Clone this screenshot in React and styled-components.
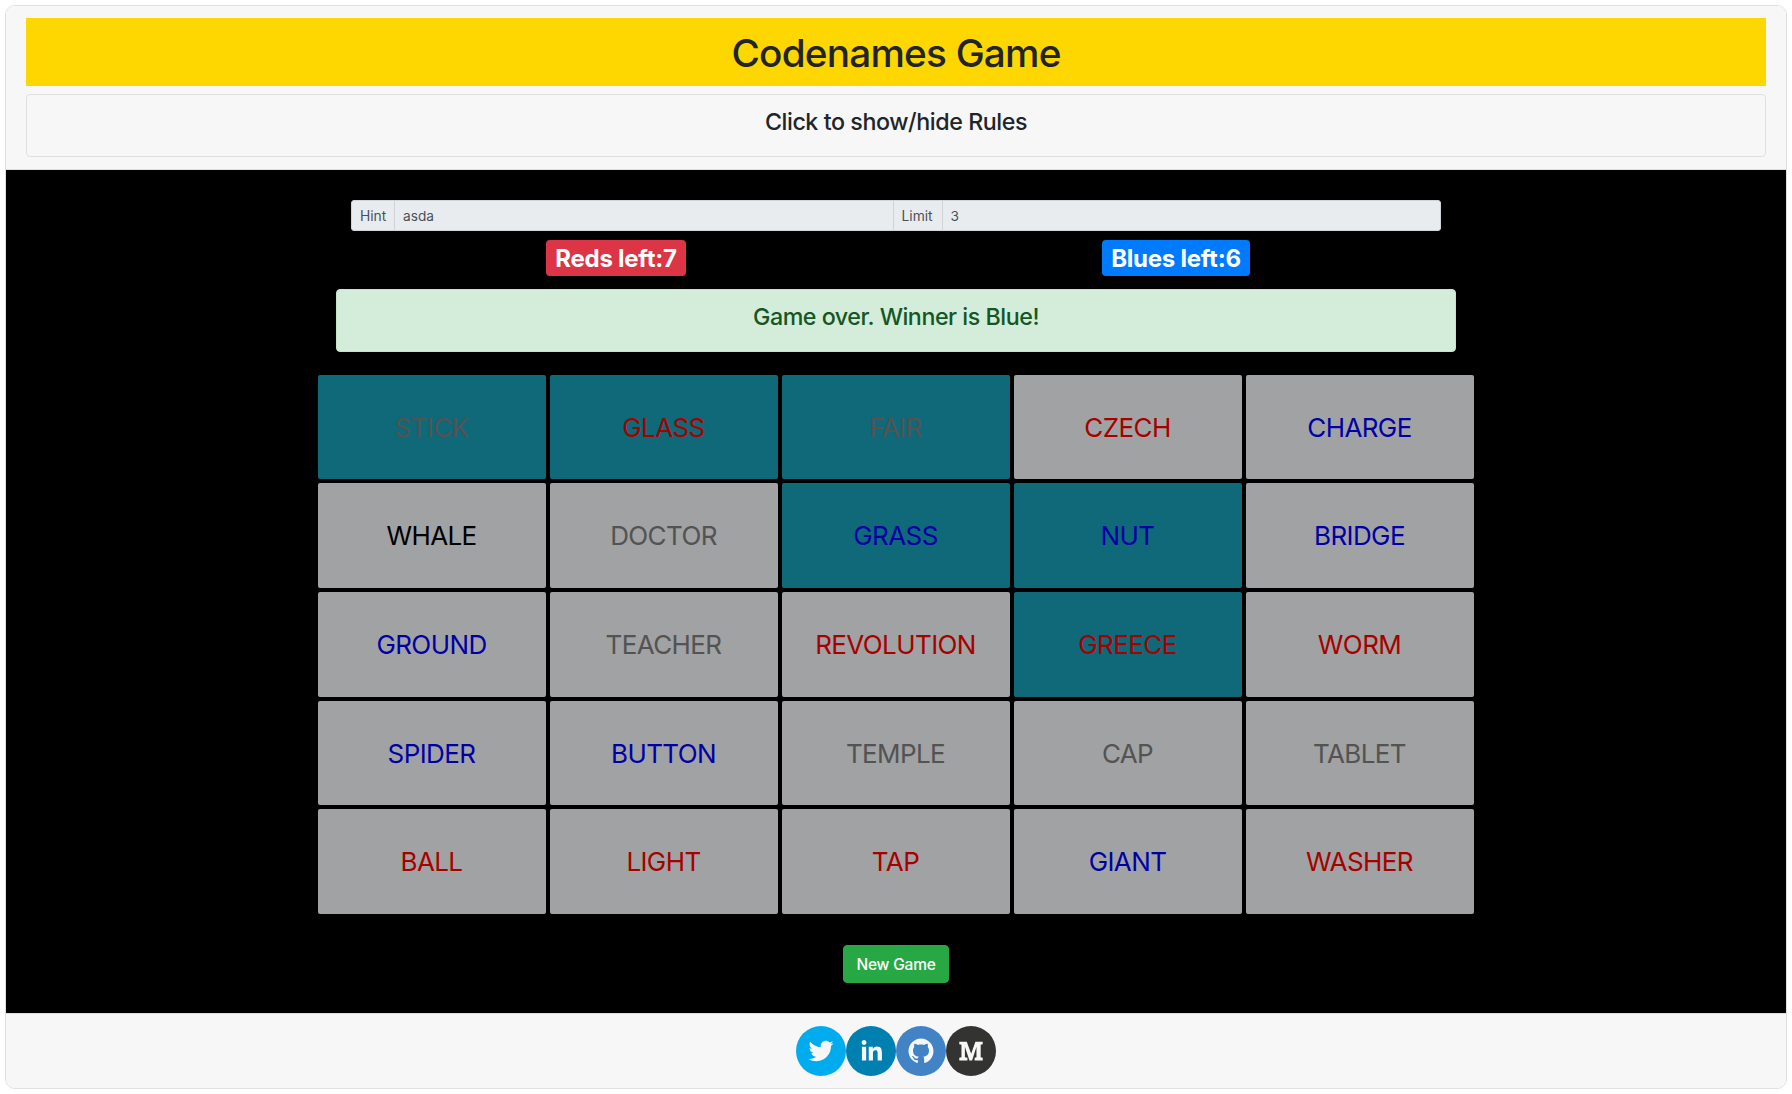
import React from 'react';
import styled, { createGlobalStyle } from 'styled-components';

const GlobalStyle = createGlobalStyle`
  *, *::before, *::after { box-sizing: border-box; }
  body {
    margin: 0;
    padding: 5px;
    background: #fff;
    color: #212529;
    font-family: Inter, "Liberation Sans", sans-serif;
    line-height: 1.5;
    -webkit-font-smoothing: antialiased;
  }
`;

const Page = styled.div`
  display: flex;
  flex-direction: column;
  width: 1782px;
  border: 1px solid #dfdfdf;
  border-radius: 10px;
  overflow: hidden;
  text-align: center;
`;

const Header = styled.header`
  height: 164px;
  padding: 12px 20px;
  display: flex;
  flex-direction: column;
  gap: 8px;
  background: #f7f7f7;
  border-bottom: 1px solid #dfdfdf;
`;

const Title = styled.h1`
  margin: 0;
  padding: 11px 10px 9px;
  height: 68px;
  background: #ffd700;
  font-size: 38.75px;
  font-weight: 500;
  line-height: 48px;
  letter-spacing: ${(p) => p.$tracking || 0}px;
`;

const Rules = styled.div`
  height: 63px;
  padding: 12px 20px;
  border: 1px solid #dfdfdf;
  border-radius: 4px;
  cursor: pointer;
`;

const RulesTitle = styled.h4`
  margin: 0;
  font-size: 23.25px;
  font-weight: 500;
  line-height: 29px;
  letter-spacing: ${(p) => p.$tracking || 0}px;
`;

const Main = styled.main`
  height: 843px;
  padding-top: 30px;
  display: flex;
  flex-direction: column;
  align-items: center;
  background: #000;
`;

const HintBar = styled.div`
  display: flex;
  width: 1090px;
  height: 31px;
  border: 1px solid #ced4da;
  border-radius: 3px;
  overflow: hidden;
  background: #e9ecef;
`;

const HintLabel = styled.label`
  width: ${(p) => p.$width}px;
  padding-left: 8px;
  text-align: left;
  border-left: ${(p) => (p.$divided ? '1px solid #ced4da' : '0')};
  border-right: 1px solid #ced4da;
  color: #495057;
  font-size: 13.8px;
  line-height: 30px;
`;

const HintInput = styled.input`
  flex: 1;
  min-width: 0;
  padding: 1px 8px 0;
  border: 0;
  background: transparent;
  color: #495057;
  font: 13.7px/28px Inter, "Liberation Sans", sans-serif;
`;

const Scores = styled.div`
  display: grid;
  grid-template-columns: 1fr 1fr;
  justify-items: center;
  width: 1120px;
  margin-top: 9px;
`;

const Badge = styled.span`
  width: ${(p) => p.$width}px;
  height: 36px;
  border-radius: 4px;
  background: ${(p) => p.$color};
  color: #fff;
  font-size: 24px;
  font-weight: 700;
  line-height: 37px;
  letter-spacing: ${(p) => p.$tracking || 0}px;
  white-space: nowrap;
`;

const Result = styled.div`
  width: 1120px;
  height: 63px;
  margin-top: 13px;
  padding: 12px 20px;
  border: 1px solid #c3e6cb;
  border-radius: 4px;
  background: #d4edda;
  color: #155724;
`;

const Board = styled.div`
  display: grid;
  grid-template-columns: repeat(5, 228px);
  grid-template-rows: 104px 105px 105px 104px 105px;
  gap: 4px;
  margin-top: 23px;
`;

const Card = styled.button`
  padding: 1.5px 1px 0 0;
  border: 0;
  border-radius: 2px;
  background: ${(p) => (p.$picked ? '#17a2b8' : '#f8f9fa')};
  color: ${(p) => p.$team};
  opacity: 0.65;
  font: 400 26px/40px Inter, "Liberation Sans", sans-serif;
  letter-spacing: -0.6px;
`;

const NewGame = styled.button`
  width: 106px;
  height: 38px;
  margin-top: 31px;
  padding: 1.5px 0 0;
  border: 1px solid #28a745;
  border-radius: 4px;
  background: #28a745;
  color: #fff;
  font: 500 15.5px/24px Inter, "Liberation Sans", sans-serif;
  letter-spacing: -0.2px;
`;

const Footer = styled.footer`
  display: flex;
  justify-content: center;
  height: 75px;
  padding-top: 12px;
  border-top: 1px solid #dfdfdf;
  background: #f7f7f7;
`;

const SocialLink = styled.a`
  width: 50px;
  height: 50px;
  border-radius: 50%;
  background: ${(p) => p.$color};
  svg { display: block; width: 50px; height: 50px; fill: #f7f7f7; }
`;

const RED = '#ff0000';
const BLUE = '#0000ff';
const GREY = '#808080';
const BLACK = '#000000';

const cards = [
  ['STICK', GREY, true], ['GLASS', RED, true], ['FAIR', GREY, true], ['CZECH', RED], ['CHARGE', BLUE],
  ['WHALE', BLACK], ['DOCTOR', GREY], ['GRASS', BLUE, true], ['NUT', BLUE, true], ['BRIDGE', BLUE],
  ['GROUND', BLUE], ['TEACHER', GREY], ['REVOLUTION', RED], ['GREECE', RED, true], ['WORM', RED],
  ['SPIDER', BLUE], ['BUTTON', BLUE], ['TEMPLE', GREY], ['CAP', GREY], ['TABLET', GREY],
  ['BALL', RED], ['LIGHT', RED], ['TAP', RED], ['GIANT', BLUE], ['WASHER', RED],
];

const socials = [
  { name: 'twitter', color: '#00aced', d: 'M48,22.1c-1.2,0.5-2.4,0.9-3.8,1c1.4-0.8,2.4-2.1,2.9-3.6c-1.3,0.8-2.7,1.3-4.2,1.6 C41.7,19.8,40,19,38.2,19c-3.6,0-6.6,2.9-6.6,6.6c0,0.5,0.1,1,0.2,1.5c-5.5-0.3-10.3-2.9-13.5-6.9c-0.6,1-0.9,2.1-0.9,3.3 c0,2.3,1.2,4.3,2.9,5.5c-1.1,0-2.1-0.3-3-0.8c0,0,0,0.1,0,0.1c0,3.2,2.3,5.8,5.3,6.4c-0.6,0.1-1.1,0.2-1.7,0.2c-0.4,0-0.8,0-1.2-0.1 c0.8,2.6,3.3,4.5,6.1,4.6c-2.2,1.8-5.1,2.8-8.2,2.8c-0.5,0-1.1,0-1.6-0.1c2.9,1.9,6.4,2.9,10.1,2.9c12.1,0,18.7-10,18.7-18.7 c0-0.3,0-0.6,0-0.8C46,24.5,47.1,23.4,48,22.1z' },
  { name: 'linkedin', color: '#007fb1', d: 'M20.4,44h5.4V26.6h-5.4V44z M23.1,18c-1.7,0-3.1,1.4-3.1,3.1c0,1.7,1.4,3.1,3.1,3.1 c1.7,0,3.1-1.4,3.1-3.1C26.2,19.4,24.8,18,23.1,18z M39.5,26.2c-2.6,0-4.4,1.4-5.1,2.8h-0.1v-2.4h-5.2V44h5.4v-8.6 c0-2.3,0.4-4.5,3.2-4.5c2.8,0,2.8,2.6,2.8,4.6V44H46v-9.5C46,29.8,45,26.2,39.5,26.2z' },
  { name: 'github', color: '#4183c4', d: 'M32,16c-8.8,0-16,7.2-16,16c0,7.1,4.6,13.1,10.9,15.2 c0.8,0.1,1.1-0.3,1.1-0.8c0-0.4,0-1.4,0-2.7c-4.5,1-5.4-2.1-5.4-2.1c-0.7-1.8-1.8-2.3-1.8-2.3c-1.5-1,0.1-1,0.1-1 c1.6,0.1,2.5,1.6,2.5,1.6c1.4,2.4,3.7,1.7,4.7,1.3c0.1-1,0.6-1.7,1-2.1c-3.6-0.4-7.3-1.8-7.3-7.9c0-1.7,0.6-3.2,1.6-4.3 c-0.2-0.4-0.7-2,0.2-4.2c0,0,1.3-0.4,4.4,1.6c1.3-0.4,2.6-0.5,4-0.5c1.4,0,2.7,0.2,4,0.5c3.1-2.1,4.4-1.6,4.4-1.6 c0.9,2.2,0.3,3.8,0.2,4.2c1,1.1,1.6,2.5,1.6,4.3c0,6.1-3.7,7.5-7.3,7.9c0.6,0.5,1.1,1.5,1.1,3c0,2.1,0,3.9,0,4.4 c0,0.4,0.3,0.9,1.1,0.8C43.4,45.1,48,39.1,48,32C48,23.2,40.8,16,32,16z' },
  { name: 'medium', color: '#333332', d: 'M17 20H26.6L32.2 35.5 37.6 20H47V23.5L44.4 24V40L47 40.5V44H36.6V40.5L39 40V26.5L33.4 44H30L24.2 26.5V40L27.4 40.5V44H17V40.5L19.8 40V24L17 23.5Z' },
];

export default function App() {
  return (
    <>
      <GlobalStyle />
      <Page>
        <Header>
          <Title $tracking={-0.8}>Codenames Game</Title>
          <Rules>
            <RulesTitle $tracking={-0.43}>Click to show/hide Rules</RulesTitle>
          </Rules>
        </Header>
        <Main>
          <HintBar>
            <HintLabel $width={43}>Hint</HintLabel>
            <HintInput value="asda" readOnly aria-label="Hint" />
            <HintLabel $width={50} $divided>Limit</HintLabel>
            <HintInput value="3" readOnly aria-label="Limit" />
          </HintBar>
          <Scores>
            <Badge $width={140} $color="#dc3545" $tracking={-0.25}>Reds left:7</Badge>
            <Badge $width={148} $color="#007bff" $tracking={-0.25}>Blues left:6</Badge>
          </Scores>
          <Result>
            <RulesTitle $tracking={-0.47}>Game over. Winner is Blue!</RulesTitle>
          </Result>
          <Board>
            {cards.map(([word, team, picked]) => (
              <Card key={word} $team={team} $picked={picked}>{word}</Card>
            ))}
          </Board>
          <NewGame>New Game</NewGame>
        </Main>
        <Footer>
          {socials.map((s) => (
            <SocialLink key={s.name} $color={s.color} aria-label={s.name}>
              <svg viewBox="0 0 64 64"><path d={s.d} /></svg>
            </SocialLink>
          ))}
        </Footer>
      </Page>
    </>
  );
}
